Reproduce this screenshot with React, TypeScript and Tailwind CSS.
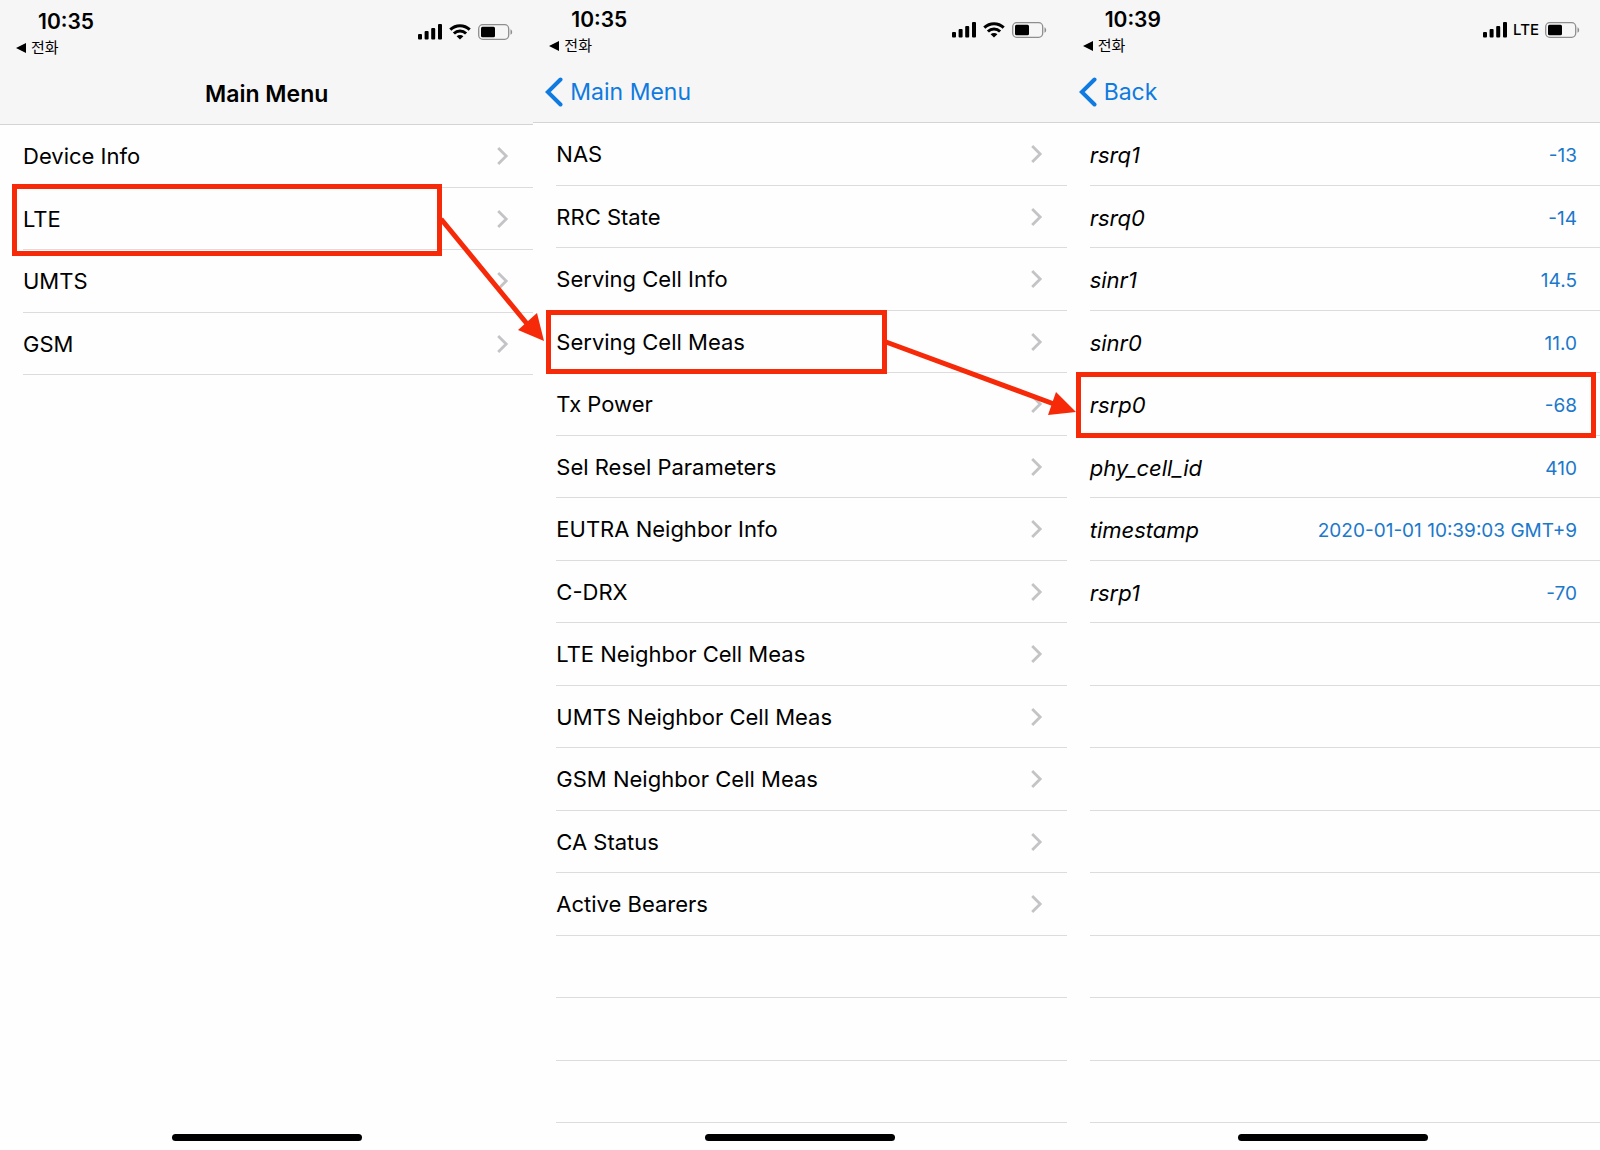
import type { ReactNode } from "react";

type StatusBarProps = {
  time: string;
  network: ReactNode;
};

type ScreenProps = StatusBarProps & {
  header: ReactNode;
  className?: string;
  label: string;
  children: ReactNode;
};

const mainMenu = ["Device Info", "LTE", "UMTS", "GSM"];

const lteMenu = [
  "NAS",
  "RRC State",
  "Serving Cell Info",
  "Serving Cell Meas",
  "Tx Power",
  "Sel Resel Parameters",
  "EUTRA Neighbor Info",
  "C-DRX",
  "LTE Neighbor Cell Meas",
  "UMTS Neighbor Cell Meas",
  "GSM Neighbor Cell Meas",
  "CA Status",
  "Active Bearers",
];

const measurements = [
  ["rsrq1", "-13"],
  ["rsrq0", "-14"],
  ["sinr1", "14.5"],
  ["sinr0", "11.0"],
  ["rsrp0", "-68"],
  ["phy_cell_id", "410"],
  ["timestamp", "2020-01-01 10:39:03 GMT+9"],
  ["rsrp1", "-70"],
];

function SignalIcon() {
  return (
    <svg width="24" height="16" viewBox="0 0 24 16" aria-hidden="true">
      <rect x="0" y="10" width="4" height="5.5" rx="1" />
      <rect x="6.6" y="7" width="4" height="8.5" rx="1" />
      <rect x="13.2" y="4" width="4" height="11.5" rx="1" />
      <rect x="20" y="0" width="4" height="15.5" rx="1" />
    </svg>
  );
}

function WifiIcon() {
  return (
    <svg
      width="22"
      height="16"
      viewBox="0 0 22 16"
      fill="none"
      stroke="black"
      strokeWidth="3"
      aria-hidden="true"
    >
      <path d="M1.3 5.6C6.8.3 15.2.3 20.7 5.6" />
      <path d="M4.9 9.5c3.4-3.3 8.8-3.3 12.2 0" />
      <path
        d="M11 15.6 7.6 12.2c1.9-1.7 4.9-1.7 6.8 0Z"
        fill="black"
        stroke="none"
      />
    </svg>
  );
}

function BatteryIcon() {
  return (
    <svg width="35" height="16" viewBox="0 0 35 16" aria-hidden="true">
      <rect
        x=".7"
        y=".7"
        width="30"
        height="14.6"
        rx="4"
        fill="none"
        stroke="#8e8e8e"
        strokeWidth="1.3"
      />
      <rect x="3" y="2.8" width="14" height="10.4" rx="1.5" />
      <path d="M32.5 5.2c2.2 1 2.2 4.6 0 5.6Z" fill="#8e8e8e" />
    </svg>
  );
}

function Chevron() {
  return (
    <svg
      width="12"
      height="18"
      viewBox="0 0 12 18"
      fill="none"
      stroke="#c4c4c6"
      strokeWidth="2.8"
      aria-hidden="true"
    >
      <path d="m1.2 1 8 8-8 8" />
    </svg>
  );
}

function StatusBar({ time, network }: StatusBarProps) {
  return (
    <div className="flex h-[60px] shrink-0 justify-between pt-2 pr-5 pl-4">
      <div>
        <p className="pl-[22px] text-[21px] leading-6 font-semibold">{time}</p>
        <a
          href="#phone"
          className="flex h-7 items-center gap-[5px] text-[15px] leading-6"
        >
          <svg width="10" height="10" viewBox="0 0 10 10" aria-hidden="true">
            <path d="M0 5 10 0v10Z" />
          </svg>
          전화
        </a>
      </div>
      <div className="flex h-11 items-center gap-[7px]">
        <SignalIcon />
        {network}
        <BatteryIcon />
      </div>
    </div>
  );
}

function Screen({
  time,
  network,
  header,
  className = "",
  label,
  children,
}: ScreenProps) {
  return (
    <section
      aria-label={label}
      className={`flex min-h-screen min-w-0 flex-col ${className}`}
    >
      <StatusBar time={time} network={network} />
      <header className="flex h-[63px] shrink-0 items-center border-b border-[#d4d4d6] pt-[2px]">
        {header}
      </header>
      <div className="flex grow flex-col justify-between bg-[#fefefe]">
        {children}
        <div className="flex h-4 shrink-0 justify-center">
          <div className="h-[7px] w-[190px] rounded-full bg-black" />
        </div>
      </div>
    </section>
  );
}

function BackButton({ children }: { children: ReactNode }) {
  return (
    <button
      type="button"
      className="flex items-center gap-[7px] pl-3 text-[23px] leading-8 text-[#0f7ae0]"
    >
      <svg
        width="18"
        height="30"
        viewBox="0 0 18 30"
        fill="none"
        stroke="currentColor"
        strokeWidth="4"
        strokeLinecap="round"
        aria-hidden="true"
      >
        <path d="M15.5 2.5 2.8 15l12.7 12.5" />
      </svg>
      {children}
    </button>
  );
}

function MenuList({ items }: { items: string[] }) {
  return (
    <>
      {items.map((item) => (
        <li
          key={item}
          className="border-b border-[#dcdcde] odd:h-[63px] even:h-[62px]"
        >
          <button
            type="button"
            className="flex h-full w-full items-center justify-between pr-6 text-left text-[22px] leading-7"
          >
            {item}
            <Chevron />
          </button>
        </li>
      ))}
    </>
  );
}

function EmptyRows({ count }: { count: number }) {
  return (
    <>
      {Array.from({ length: count }, (_, i) => (
        <li
          key={i}
          aria-hidden="true"
          className="border-b border-[#dcdcde] odd:h-[63px] even:h-[62px]"
        />
      ))}
    </>
  );
}

// Red boxes and arrows that walk the reader through the three screens
function Annotations() {
  return (
    <svg
      className="pointer-events-none absolute inset-0 h-full w-full"
      viewBox="0 0 1600 1150"
      preserveAspectRatio="xMinYMin meet"
      fill="none"
      stroke="#f62a08"
      strokeWidth="5"
      aria-hidden="true"
    >
      <rect x="14.5" y="186.5" width="425" height="67" />
      <rect x="548.5" y="312.5" width="336" height="59" />
      <rect x="1078.5" y="374.5" width="515" height="61" />
      <path d="m441 219 87 106M886 342l168 62" />
      <g fill="#f62a08" stroke="none">
        <path d="m544 341-7-28-19 17Z" />
        <path d="m1076 412-20-20-8 23Z" />
      </g>
    </svg>
  );
}

export default function App() {
  return (
    <main className="relative grid min-h-screen grid-cols-3 bg-[#f6f6f6] font-['Inter','Noto_Sans_CJK_KR',sans-serif] text-black">
      <Screen
        label="Main Menu"
        time="10:35"
        network={<WifiIcon />}
        className="pt-[2px]"
        header={
          <h1 className="w-full text-center text-[23px] leading-8 font-semibold">
            Main Menu
          </h1>
        }
      >
        <ul className="pl-[23px]">
          <MenuList items={mainMenu} />
        </ul>
      </Screen>
      <Screen
        label="LTE"
        time="10:35"
        network={<WifiIcon />}
        header={<BackButton>Main Menu</BackButton>}
      >
        <ul className="pl-[23px]">
          <MenuList items={lteMenu} />
          <EmptyRows count={3} />
        </ul>
      </Screen>
      <Screen
        label="Serving Cell Meas"
        time="10:39"
        network={
          <span className="-mx-px text-[15px] leading-5 font-medium">LTE</span>
        }
        header={<BackButton>Back</BackButton>}
      >
        <ul className="pl-[23px]">
          {measurements.map(([name, value]) => (
            <li
              key={name}
              className="flex items-center justify-between border-b border-[#dcdcde] pt-[2px] pr-[23px] odd:h-[63px] even:h-[62px]"
            >
              <span className="text-[22px] leading-7 italic">{name}</span>
              <span className="pt-[2px] text-[19px] leading-6 text-[#1b78cb]">
                {value}
              </span>
            </li>
          ))}
          <EmptyRows count={8} />
        </ul>
      </Screen>
      <Annotations />
    </main>
  );
}
